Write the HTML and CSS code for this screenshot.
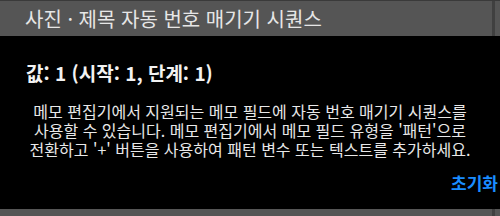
FILE: index.html
```html
<!DOCTYPE html>
<html lang="ko">
<head>
  <meta charset="UTF-8">
  <meta name="viewport" content="width=device-width, initial-scale=1.0">
  <title>자동 번호 매기기 시퀀스</title>
  <link rel="stylesheet" href="styles.css">
</head>
<body>
  <!-- 대화상자 -->
  <div class="dialogo">
    <div class="barra-titulo">
      <h2>사진 · 제목 자동 번호 매기기 시퀀스</h2>
      <span class="borde"></span>
    </div>

    <div class="contenido">
      <p class="valor">값: 1 (시작: 1, 단계: 1)</p>
      <p class="descripcion">메모 편집기에서 지원되는 메모 필드에 자동 번호 매기기 시퀀스를 사용할 수 있습니다. 메모 편집기에서 메모 필드 유형을 '패턴'으로 전환하고 '+' 버튼을 사용하여 패턴 변수 또는 텍스트를 추가하세요.</p>
      <div class="acciones">
        <a class="btn-reset">초기화</a>
      </div>
    </div>

    <div class="barra-inferior">
      <span class="relleno"></span>
      <span class="borde"></span>
    </div>
  </div>
</body>
</html>
```

FILE: styles.css
```css
body {
  font-family: "Noto Sans CJK KR", "Noto Sans", sans-serif;
  background-color: #000;
  margin: 0;
  padding: 0;
  color: white;
  overflow: hidden;
}

.dialogo {
  width: 500px;
  height: 216px;
  display: flex;
  flex-direction: column;
}

/* Barra de titulo */
.barra-titulo {
  display: flex;
  align-items: center;
  height: 35px;
  background-color: #555555;
  border-top: 1px solid #3a3a3a;
}

.barra-titulo h2 {
  flex: 1;
  margin: 0;
  padding-left: 25px;
  font-size: 20px;
  font-weight: normal;
  color: #e6e6e6;
  line-height: 35px;
}

.borde {
  align-self: stretch;
  width: 3px;
  margin-right: 5px;
  background-color: #404040;
}

.contenido {
  flex: 1;
  padding: 0 0 0 26px;
}

.valor {
  margin: 23px 0 0 0;
  font-size: 19px;
  font-weight: bold;
  color: #f2f2f2;
}

.descripcion {
  margin: 16px 26px 0 0;
  font-size: 16px;
  line-height: 19px;
  text-align: center;
  word-break: keep-all;
  color: #e8e8e8;
}

.acciones {
  text-align: right;
  margin-top: 11px;
}

.btn-reset {
  font-size: 17px;
  font-weight: bold;
  color: #1a8cff;
  margin-right: 2px;
}

.barra-inferior {
  display: flex;
  height: 7px;
  background-color: #555555;
}

.relleno {
  flex: 1;
}
```
